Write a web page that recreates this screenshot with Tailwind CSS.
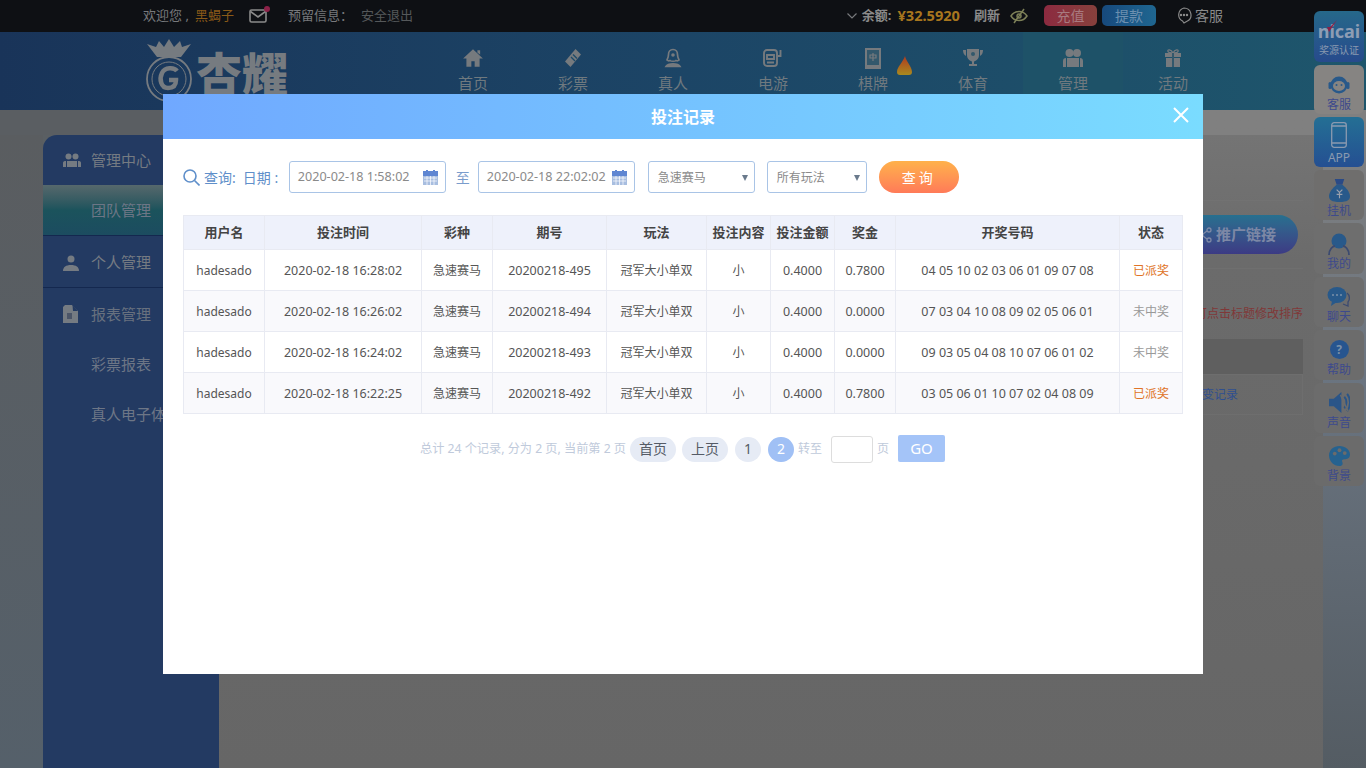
<!DOCTYPE html>
<html lang="zh-CN">
<head>
  <meta charset="UTF-8">
  <title>投注记录</title>
  <script src="https://cdn.jsdelivr.net/npm/@tailwindcss/browser@4"></script>
</head>
<body class="font-['Noto_Sans','Noto_Sans_CJK_SC',sans-serif]">
  <div class="relative flex h-[768px] w-[1366px] flex-col overflow-hidden bg-[#5a5f63]">

    <!-- top bar -->
    <div class="flex h-[32px] shrink-0 items-center bg-[#0e1014] pl-[143px] pr-[143px] text-[13px] text-[#77797c]">
      <span class="w-[52px] whitespace-nowrap">欢迎您 ,</span>
      <span class="text-[#8a5a18]">黑蝎子</span>
      <span class="relative ml-[15px] block h-[14px] w-[18px]">
        <svg viewBox="0 0 18 14" class="h-[14px] w-[18px]" fill="none" stroke="#8a8a8a" stroke-width="1.6"><rect x="1" y="1" width="16" height="12" rx="1.500"/><path d="M1.500 2.500 9 8l7.500-5.500"/></svg>
        <span class="absolute -right-[3px] -top-[3px] h-[6px] w-[6px] rounded-full bg-[#8c2148]"></span>
      </span>
      <span class="ml-[21px]">预留信息：</span>
      <span class="ml-[8px] text-[#55585a]">安全退出</span>

      <div class="ml-auto flex items-center">
        <svg viewBox="0 0 10 6" class="h-[6px] w-[10px]" fill="none" stroke="#77797c" stroke-width="1.200"><path d="M.5.5 5 5 9.500.5"/></svg>
        <span class="ml-[5px] font-bold text-[#8a8a8a]">余额:</span>
        <span class="ml-[6px] text-[14.6px] font-bold text-[#a8761e]">¥32.5920</span>
        <span class="ml-[14px] font-bold text-[#8a8a8a]">刷新</span>
        <svg viewBox="0 0 18 16" class="ml-[10px] h-[16px] w-[18px]" fill="none" stroke="#7d8058" stroke-width="1.500"><path d="M1 8s3-4.500 8-4.500S17 8 17 8s-3 4.500-8 4.500S1 8 1 8Z"/><circle cx="9" cy="8" r="2"/><path d="M14 1 4 15"/></svg>
        <span class="ml-[16px] flex h-[21px] w-[53px] items-center justify-center rounded-[5px] bg-gradient-to-r from-[#8c2a40] to-[#86403c] text-[14px] text-[#a87a80]">充值</span>
        <span class="ml-[5px] flex h-[21px] w-[54px] items-center justify-center rounded-[5px] bg-gradient-to-r from-[#17497c] to-[#1f6690] text-[14px] text-[#6d90b0]">提款</span>
        <svg viewBox="0 0 16 17" class="ml-[20px] h-[17px] w-[16px]" fill="none" stroke="#8a8a8a" stroke-width="1.200"><path d="M8 1a7 7 0 0 1 3 13.300L8 16l-1.500-2A7 7 0 0 1 8 1Z"/><circle cx="5" cy="8" r=".6" fill="#8a8a8a"/><circle cx="8" cy="8" r=".6" fill="#8a8a8a"/><circle cx="11" cy="8" r=".6" fill="#8a8a8a"/></svg>
        <span class="ml-[3px] text-[14px] text-[#8a8a8a]">客服</span>
      </div>
    </div>

    <!-- header -->
    <div class="flex h-[78px] shrink-0 bg-gradient-to-r from-[#193459] via-[#1c4566] to-[#1e566c] pl-[143px]">
      <div class="relative h-[78px] w-[280px] shrink-0 overflow-hidden">
        <svg viewBox="0 0 52 66" class="absolute left-[1px] top-[6px] h-[66px] w-[52px]" fill="none" stroke="#767b80" stroke-width="1.800">
          <path d="M13 19 3 6l9 3 3-6 5 6 5-8 5 8 6-6 2 6 9-3-10 13Z" fill="#767b80" stroke="none"/>
          <circle cx="25" cy="41" r="22"/>
          <circle cx="25" cy="41" r="17" stroke-width="1"/>
          <path d="M33 33c-3-4-12-4-15 2s-1 15 6 15 8-5 8-8h-7" stroke-width="4.500"/>
        </svg>
        <span class="absolute left-[53px] top-[11px] text-[46px] font-black leading-[60px] text-[#767b80]">杏耀</span>
      </div>
      <nav class="flex">
        <a class="flex w-[100px] flex-col items-center pt-[16px] text-[15px] leading-[22px] text-[#6f797f]">
          <svg viewBox="0 0 20 18" class="h-[20px] w-[22px]" fill="#767a7e"><path d="M10 1 1 9.500h3V17h4.500v-5h3v5H16V9.500h3Z"/><path d="M14 2h2.500v4L14 4Z"/></svg>
          <span class="mt-[4px]">首页</span>
        </a>
        <a class="flex w-[100px] flex-col items-center pt-[16px] text-[15px] leading-[22px] text-[#6f797f]">
          <svg viewBox="0 0 20 20" class="h-[20px] w-[22px]"><path d="M12.500 1 18 6.500 7.500 19 2 13.500Z" fill="#767a7e"/><path d="m8 9 4 4M10 6.500l4 4" stroke="#1d4a68" stroke-width="1.300"/></svg>
          <span class="mt-[4px]">彩票</span>
        </a>
        <a class="flex w-[100px] flex-col items-center pt-[16px] text-[15px] leading-[22px] text-[#6f797f]">
          <svg viewBox="0 0 20 20" class="h-[20px] w-[22px]" fill="none" stroke="#767a7e" stroke-width="1.700"><path d="M10 1.500c3 0 4.500 2.500 4.500 5S15 10 16 12c-1 1-2 1-3 .5-1 1-5 1-6 0-1 .5-2 .5-3-.5 1-2 1.500-3 1.500-5.500S7 1.500 10 1.500Z"/><circle cx="10" cy="7" r="1.800" fill="#767a7e" stroke="none"/><path d="M3 18.500c2-3.500 12-3.500 14 0Z" fill="#767a7e"/></svg>
          <span class="mt-[4px]">真人</span>
        </a>
        <a class="flex w-[100px] flex-col items-center pt-[16px] text-[15px] leading-[22px] text-[#6f797f]">
          <svg viewBox="0 0 22 20" class="h-[20px] w-[22px]" fill="none" stroke="#767a7e" stroke-width="1.900"><rect x="2" y="2" width="13" height="16" rx="3"/><path d="M5 7h7v4H5zM5 14.500h7"/><path d="M18.500 2v6h-3"/></svg>
          <span class="mt-[4px]">电游</span>
        </a>
        <a class="relative flex w-[100px] flex-col items-center pt-[16px] text-[15px] leading-[22px] text-[#6f797f]">
          <svg viewBox="0 0 16 21" class="h-[21px] w-[16px]"><rect width="16" height="21" fill="#767a7e"/><rect x="2" y="2" width="12" height="15" fill="#33586c"/><path d="M8 5v8M5 7h6v3H5z" fill="none" stroke="#767a7e" stroke-width="1.200"/></svg>
          <svg viewBox="0 0 15 19" class="absolute left-[74px] top-[24px] h-[19px] w-[15px]">
            <defs><linearGradient id="flame" x1="0" y1="0" x2="0" y2="1"><stop offset="0" stop-color="#b03a20"/><stop offset="1" stop-color="#a88a1e"/></linearGradient></defs>
            <path d="M8 0c1 5 7 11 7 16 0 2-1 3-3 3H3c-2 0-3-1-3-3C0 11 6 6 8 0Z" fill="url(#flame)"/>
          </svg>
          <span class="pt-[3px]">棋牌</span>
        </a>
        <a class="flex w-[100px] flex-col items-center pt-[16px] text-[15px] leading-[22px] text-[#6f797f]">
          <svg viewBox="0 0 22 20" class="h-[20px] w-[22px]" fill="#767a7e"><path d="M5 1h12v6c0 4-3 6-5 6.500V16h3v2H7v-2h3v-2.500C8 13 5 11 5 7ZM1 2h3v6C2 7 1 5 1 2ZM21 2h-3v6c2-1 3-3 3-6Z"/><circle cx="11" cy="6" r="2" fill="#33586c"/></svg>
          <span class="mt-[4px]">体育</span>
        </a>
        <a class="flex w-[100px] flex-col items-center bg-[#1e5268] pt-[16px] text-[15px] leading-[22px] text-[#6f797f]">
          <svg viewBox="0 0 22 20" class="h-[20px] w-[22px]" fill="#767a7e"><circle cx="7.500" cy="5" r="4"/><circle cx="15" cy="5" r="4"/><path d="M5 10h12v9H5ZM1 13c0-2 1-3 3-3v9H1ZM21 13c0-2-1-3-3-3v9h3Z"/></svg>
          <span class="mt-[4px]">管理</span>
        </a>
        <a class="flex w-[100px] flex-col items-center pt-[16px] text-[15px] leading-[22px] text-[#6f797f]">
          <svg viewBox="0 0 20 20" class="h-[20px] w-[22px]" fill="#767a7e"><path d="M2 5h16v4H2ZM3 10h14v9H3Z"/><path d="M10 5C8 1 4 1 5 3.500 5.500 5 8 5 10 5c2 0 4.500 0 5-1.500C16 1 12 1 10 5Z" fill="none" stroke="#767a7e" stroke-width="1.300"/><path d="M9 5h2v14H9Z" fill="#33586c"/></svg>
          <span class="mt-[4px]">活动</span>
        </a>
      </nav>
    </div>

    <!-- page behind the dialog -->
    <div class="h-[25px] shrink-0 bg-gradient-to-r from-[#5a5e62] from-15% to-[#808080] to-85%"></div>
    <div class="flex min-h-0 flex-1">
      <div class="w-[43px] shrink-0 bg-gradient-to-b from-[#5a5d60] to-[#55606a]"></div>

      <aside class="w-[176px] shrink-0 overflow-hidden rounded-tl-[14px] bg-[#233a62] text-[15px] text-[#6d7686]">
        <div class="flex h-[50px] items-center pl-[20px]">
          <svg viewBox="0 0 18 15" class="h-[15px] w-[18px]" fill="#757b82"><circle cx="5.500" cy="3.500" r="3"/><circle cx="12.500" cy="3.500" r="3"/><path d="M4 8h10v6H4ZM0 10c0-1.500 1-2 3-2v6H0ZM18 10c0-1.500-1-2-3-2v6h3Z"/></svg>
          <span class="ml-[10px] text-[#757b82]">管理中心</span>
        </div>
        <div class="flex h-[51px] items-center border-b border-[#14284f] bg-gradient-to-b from-[#56686c] via-[#1b535c] to-[#1c4c60] pl-[48px]">团队管理</div>
        <div class="flex h-[52px] items-center border-b border-[#14284f] pl-[20px] pt-[2px]">
          <svg viewBox="0 0 16 16" class="h-[16px] w-[16px]" fill="#757b82"><circle cx="8" cy="4" r="3.500"/><path d="M0 16c0-4 3-6 8-6s8 2 8 6Z"/></svg>
          <span class="ml-[12px] text-[#757b82]">个人管理</span>
        </div>
        <div class="flex h-[52px] items-center pl-[20px]">
          <svg viewBox="0 0 15 18" class="h-[18px] w-[15px]" fill="#757b82"><path d="M2 0h7l6 6v12H0V2Z"/><path d="M9.500 0 15 6h-5Z" fill="#233a62"/><path d="M4 8h5v6H4Z" fill="#4b5568"/></svg>
          <span class="ml-[13px] text-[#68717f]">报表管理</span>
        </div>
        <div class="flex h-[50px] items-center pb-[2px] pl-[48px]">彩票报表</div>
        <div class="flex h-[50px] items-center whitespace-nowrap pb-[2px] pl-[48px]">真人电子体育报表</div>
      </aside>

      <main class="min-w-0 flex-1 bg-gradient-to-b from-[#747474] via-[#6b6b6b] via-20% to-[#666666] pr-[20px]">
        <div class="h-[66px] border-b border-[#727272]"></div>
        <div class="flex justify-end pr-[5px] pt-[14px]">
          <span class="flex h-[39px] w-[130px] items-center justify-end rounded-full bg-gradient-to-b from-[#26708f] to-[#3c3a84] pr-[22px] text-[15px] font-bold text-[#7d88a6]">
            <svg viewBox="0 0 14 16" class="mr-[4px] h-[16px] w-[14px]" fill="none" stroke="#7d88a6" stroke-width="1.300"><circle cx="3" cy="8" r="2"/><circle cx="11" cy="3" r="2"/><circle cx="11" cy="13" r="2"/><path d="m5 7 4-3M5 9l4 3"/></svg>
            推广链接
          </span>
        </div>
        <div class="mt-[14px] h-[1px] bg-[#6f6f6f]"></div>
        <div class="pt-[37px] text-right text-[12px] leading-[16px] text-[#803838]">可点击标题修改排序</div>
        <div class="mt-[17px] h-[35px] bg-[#5f5f5f]"></div>
        <div class="flex h-[41px] items-center justify-end border border-[#6e6e6e] pr-[64px] text-[12px] text-[#2f4f8f]">投注变记录</div>
      </main>

      <div class="w-[43px] shrink-0 bg-gradient-to-b from-[#808080] via-[#6a7480] via-40% to-[#545c63]"></div>
    </div>

    <!-- floating side menu -->
    <div class="absolute right-[2px] top-[11px] flex w-[50px] flex-col gap-[3px] text-center text-[12px] leading-[14px] text-[#3d4a8c]">
      <div class="relative flex h-[51px] flex-col items-center rounded-[6px] bg-gradient-to-b from-[#26688a] to-[#274a8c] pt-[10px] text-[#8a9ab0]">
        <span class="text-[18px] font-bold leading-[20px] text-[#8d9db4]">nicai</span>
        <span class="mt-[2px] whitespace-nowrap text-[10px] leading-[14px]">奖源认证</span>
        <svg viewBox="0 0 10 12" class="absolute left-[13px] top-[9px] h-[12px] w-[10px]"><path d="M0 7 2 12 10 0 3 7Z" fill="#8c2148"/></svg>
      </div>
      <div class="flex h-[49px] flex-col items-center rounded-[6px] bg-[#868482] pt-[8px]">
        <svg viewBox="0 0 24 24" class="h-[24px] w-[24px]"><circle cx="12" cy="12" r="8.500" fill="#28598a"/><ellipse cx="12" cy="13" rx="6" ry="5" fill="#868482"/><rect x="1.500" y="9" width="3" height="7" rx="1.500" fill="#28598a"/><rect x="19.500" y="9" width="3" height="7" rx="1.500" fill="#28598a"/><circle cx="9.500" cy="12" r="1" fill="#28598a"/><circle cx="14.500" cy="12" r="1" fill="#28598a"/></svg>
        <span class="mt-[1px]">客服</span>
      </div>
      <div class="flex h-[50px] flex-col items-center rounded-[6px] bg-gradient-to-b from-[#246f94] to-[#254f92] pt-[5px] text-[#8a9ab0]">
        <svg viewBox="0 0 16 26" class="h-[26px] w-[16px]" fill="none" stroke="#8a9ab0" stroke-width="1.300"><rect x=".7" y=".7" width="14.600" height="24.600" rx="2.500"/><path d="M1 4h14M1 21h14"/></svg>
        <span class="mt-[3px] text-[12px]">APP</span>
      </div>
      <div class="flex h-[50px] flex-col items-center rounded-[6px] bg-[#6f6e6d] pt-[9px]">
        <svg viewBox="0 0 22 24" class="h-[23px] w-[21px]"><path d="M6 0h10l-2 6H8Z" fill="#2a4a86"/><path d="M8 6h6c4 3 8 8 8 12 0 4-3 6-11 6S0 22 0 18c0-4 4-9 8-12Z" fill="#28598a"/><path d="M8 11l3 3 3-3M11 14v6M8 16h6" fill="none" stroke="#9aa0ac" stroke-width="1.200"/></svg>
        <span class="mt-[2px]">挂机</span>
      </div>
      <div class="flex h-[51px] flex-col items-center rounded-[6px] bg-[#6e6e6e] pt-[9px]">
        <svg viewBox="0 0 24 24" class="h-[24px] w-[24px]"><circle cx="12" cy="9" r="7.500" fill="#28598a"/><path d="M2 23c0-6 4-9 6-9M22 23c0-6-4-9-6-9" fill="none" stroke="#3b4a70" stroke-width="1.800"/></svg>
        <span class="mt-[1px]">我的</span>
      </div>
      <div class="flex h-[50px] flex-col items-center rounded-[6px] bg-[#6d6d6d] pt-[9px]">
        <svg viewBox="0 0 24 22" class="h-[22px] w-[24px]"><ellipse cx="10" cy="9" rx="9.500" ry="8" fill="#28598a"/><path d="M5 15 4 20l6-4Z" fill="#28598a"/><circle cx="6" cy="9" r="1" fill="#7a90a8"/><circle cx="10" cy="9" r="1" fill="#7a90a8"/><circle cx="14" cy="9" r="1" fill="#7a90a8"/><path d="M20 7c3 2 3 7 1 9v4l-5-2" fill="none" stroke="#3b4a70" stroke-width="1.300"/></svg>
        <span class="mt-[2px]">聊天</span>
      </div>
      <div class="flex h-[50px] flex-col items-center rounded-[6px] bg-[#6c6c6c] pt-[10px]">
        <span class="flex h-[19px] w-[19px] items-center justify-center rounded-full bg-[#27558f] text-[12px] font-bold leading-none text-[#7a90a8]">?</span>
        <span class="mt-[4px]">帮助</span>
      </div>
      <div class="flex h-[50px] flex-col items-center rounded-[6px] bg-[#6c6c6c] pt-[9px]">
        <svg viewBox="0 0 22 22" class="h-[21px] w-[21px]"><path d="M0 7h5l8-7v22l-8-7H0Z" fill="#2a5588"/><path d="M16 5c3 3 3 9 0 12M19 2c4 5 4 13 0 18" fill="none" stroke="#2a5588" stroke-width="2"/><path d="m12 3 8 17" stroke="#6c6c6c" stroke-width="1.500"/></svg>
        <span class="mt-[3px]">声音</span>
      </div>
      <div class="flex h-[50px] flex-col items-center rounded-[6px] bg-[#6b6b6b] pt-[9px]">
        <svg viewBox="0 0 22 22" class="h-[21px] w-[21px]"><path d="M11 1c6 0 11 4 11 9 0 4-3 5-6 5-2 0-3 1-2 3 1 3-1 4-3 4C5 22 0 17 0 11S5 1 11 1Z" fill="#26628f"/><circle cx="6" cy="9" r="2" fill="#6b6b6b"/><circle cx="11" cy="5.500" r="2" fill="#6b6b6b"/><circle cx="16.500" cy="8.500" r="2" fill="#6b6b6b"/></svg>
        <span class="mt-[3px]">背景</span>
      </div>
    </div>

    <!-- dialog -->
    <div class="absolute left-[163px] top-[94px] h-[580px] w-[1040px] bg-white">
      <div class="relative flex h-[45px] items-center justify-center bg-gradient-to-r from-[#70a8ff] to-[#7adcff] text-[16px] font-bold text-white">
        投注记录
        <svg viewBox="0 0 16 16" class="absolute right-[14px] top-[13px] h-[16px] w-[16px]" fill="none" stroke="#fff" stroke-width="2"><path d="m1 1 14 14M15 1 1 15"/></svg>
      </div>

      <div class="px-[20px]">
        <!-- search form -->
        <div class="mt-[22px] flex h-[32px] items-center text-[14px] text-[#5f8fca]">
          <svg viewBox="0 0 17 17" class="h-[17px] w-[17px]" fill="none" stroke="#5f8fca" stroke-width="1.600"><circle cx="7" cy="7" r="6"/><path d="m11.500 11.500 5 5"/></svg>
          <span class="ml-[4px]">查询:</span>
          <span class="ml-[7px] w-[46px] whitespace-nowrap">日期 :</span>
          <div class="flex h-[32px] w-[157px] items-center justify-between rounded-[3px] border border-[#a9c4e6] pl-[8px] pr-[7px] pt-[1px] text-[12.6px] text-[#8a8a8a]">
            <span>2020-02-18 1:58:02</span>
            <svg viewBox="0 0 15 15" class="h-[15px] w-[15px]"><rect y="2" width="15" height="13" fill="#a8bee0"/><rect width="15" height="5" y="1" fill="#5f86d2"/><rect x="3" width="2" height="3" fill="#5f86d2"/><rect x="10" width="2" height="3" fill="#5f86d2"/><path d="M1 8h13M1 11h13M4 6v9M7.500 6v9M11 6v9" stroke="#fff" stroke-width=".7"/></svg>
          </div>
          <span class="ml-[10px] w-[22px] text-[#7a9ccc]">至</span>
          <div class="flex h-[32px] w-[157px] items-center justify-between rounded-[3px] border border-[#a9c4e6] pl-[8px] pr-[7px] pt-[1px] text-[12.6px] text-[#8a8a8a]">
            <span class="whitespace-nowrap">2020-02-18 22:02:02</span>
            <svg viewBox="0 0 15 15" class="h-[15px] w-[15px] shrink-0"><rect y="2" width="15" height="13" fill="#a8bee0"/><rect width="15" height="5" y="1" fill="#5f86d2"/><rect x="3" width="2" height="3" fill="#5f86d2"/><rect x="10" width="2" height="3" fill="#5f86d2"/><path d="M1 8h13M1 11h13M4 6v9M7.500 6v9M11 6v9" stroke="#fff" stroke-width=".7"/></svg>
          </div>
          <div class="ml-[13px] flex h-[32px] w-[107px] items-center justify-between rounded-[3px] border border-[#a9c4e6] pl-[9px] pr-[6px] pt-[1px] text-[12px] text-[#8a8a8a]">
            <span>急速赛马</span>
            <span class="h-0 w-0 border-x-[3px] border-t-[6px] border-x-transparent border-t-[#6a7a8c]"></span>
          </div>
          <div class="ml-[12px] flex h-[32px] w-[100px] items-center justify-between rounded-[3px] border border-[#a9c4e6] pl-[9px] pr-[6px] pt-[1px] text-[12px] text-[#8a8a8a]">
            <span>所有玩法</span>
            <span class="h-0 w-0 border-x-[3px] border-t-[6px] border-x-transparent border-t-[#6a7a8c]"></span>
          </div>
          <span class="ml-[12px] flex h-[32px] w-[80px] items-center justify-center rounded-full bg-gradient-to-b from-[#ffb14a] to-[#ff7a58] text-[14px] tracking-[3px] text-white">查询</span>
        </div>

        <!-- records table -->
        <table class="mt-[22px] w-[999px] table-fixed border-collapse text-center text-[12px] text-[#555555]">
          <colgroup>
            <col class="w-[81px]"><col class="w-[157px]"><col class="w-[71px]"><col class="w-[114px]"><col class="w-[100px]"><col class="w-[64px]"><col class="w-[64px]"><col class="w-[61px]"><col class="w-[224px]"><col class="w-[63px]">
          </colgroup>
          <thead class="bg-[#eef1fb] text-[13px] font-bold text-[#444444]">
            <tr class="h-[34px]">
              <th class="border border-[#e8eaf2]">用户名</th>
              <th class="border border-[#e8eaf2]">投注时间</th>
              <th class="border border-[#e8eaf2]">彩种</th>
              <th class="border border-[#e8eaf2]">期号</th>
              <th class="border border-[#e8eaf2]">玩法</th>
              <th class="border border-[#e8eaf2]">投注内容</th>
              <th class="border border-[#e8eaf2]">投注金额</th>
              <th class="border border-[#e8eaf2]">奖金</th>
              <th class="border border-[#e8eaf2]">开奖号码</th>
              <th class="border border-[#e8eaf2]">状态</th>
            </tr>
          </thead>
          <tbody class="[&_td]:border [&_td]:border-[#e8eaf2] [&_td]:pt-[2px]">
            <tr class="h-[41px]">
              <td>hadesado</td><td class="text-[12.5px]">2020-02-18 16:28:02</td><td>急速赛马</td><td class="text-[12.5px]">20200218-495</td><td>冠军大小单双</td><td>小</td><td class="text-[12.5px]">0.4000</td><td class="text-[12.5px]">0.7800</td><td class="text-[12.5px]">04 05 10 02 03 06 01 09 07 08</td><td class="text-[#e07428]">已派奖</td>
            </tr>
            <tr class="h-[41px] bg-[#f9f9fc]">
              <td>hadesado</td><td class="text-[12.5px]">2020-02-18 16:26:02</td><td>急速赛马</td><td class="text-[12.5px]">20200218-494</td><td>冠军大小单双</td><td>小</td><td class="text-[12.5px]">0.4000</td><td class="text-[12.5px]">0.0000</td><td class="text-[12.5px]">07 03 04 10 08 09 02 05 06 01</td><td class="text-[#999999]">未中奖</td>
            </tr>
            <tr class="h-[41px]">
              <td>hadesado</td><td class="text-[12.5px]">2020-02-18 16:24:02</td><td>急速赛马</td><td class="text-[12.5px]">20200218-493</td><td>冠军大小单双</td><td>小</td><td class="text-[12.5px]">0.4000</td><td class="text-[12.5px]">0.0000</td><td class="text-[12.5px]">09 03 05 04 08 10 07 06 01 02</td><td class="text-[#999999]">未中奖</td>
            </tr>
            <tr class="h-[41px] bg-[#f9f9fc]">
              <td>hadesado</td><td class="text-[12.5px]">2020-02-18 16:22:25</td><td>急速赛马</td><td class="text-[12.5px]">20200218-492</td><td>冠军大小单双</td><td>小</td><td class="text-[12.5px]">0.4000</td><td class="text-[12.5px]">0.7800</td><td class="text-[12.5px]">03 05 06 01 10 07 02 04 08 09</td><td class="text-[#e07428]">已派奖</td>
            </tr>
          </tbody>
        </table>

        <!-- pager -->
        <div class="mt-[21px] flex h-[28px] items-center pl-[237px] text-[12px] text-[#c0cadb]">
          <span class="w-[210px] whitespace-nowrap text-[12.2px]">总计 24 个记录, 分为 2 页, 当前第 2 页</span>
          <span class="flex h-[25px] w-[46px] items-center justify-center rounded-full bg-[#e6ebf5] pb-[2px] text-[14px] text-[#555b66]">首页</span>
          <span class="ml-[6px] flex h-[25px] w-[46px] items-center justify-center rounded-full bg-[#e6ebf5] pb-[2px] text-[14px] text-[#555b66]">上页</span>
          <span class="ml-[7px] flex h-[25px] w-[26px] items-center justify-center rounded-full bg-[#e6ebf5] pb-[2px] text-[14px] text-[#555b66]">1</span>
          <span class="ml-[7px] flex h-[25px] w-[26px] items-center justify-center rounded-full bg-[#a0c0f5] pb-[2px] text-[14px] text-white">2</span>
          <span class="ml-[4px] w-[33px]">转至</span>
          <span class="h-[27px] w-[42px] rounded-[3px] border border-[#dddddd]"></span>
          <span class="ml-[4px] w-[21px]">页</span>
          <span class="-mt-[1px] flex h-[27px] w-[47px] items-center justify-center rounded-[2px] bg-[#a4c4f8] text-[15px] text-white">GO</span>
        </div>
      </div>
    </div>
  </div>
</body>
</html>
